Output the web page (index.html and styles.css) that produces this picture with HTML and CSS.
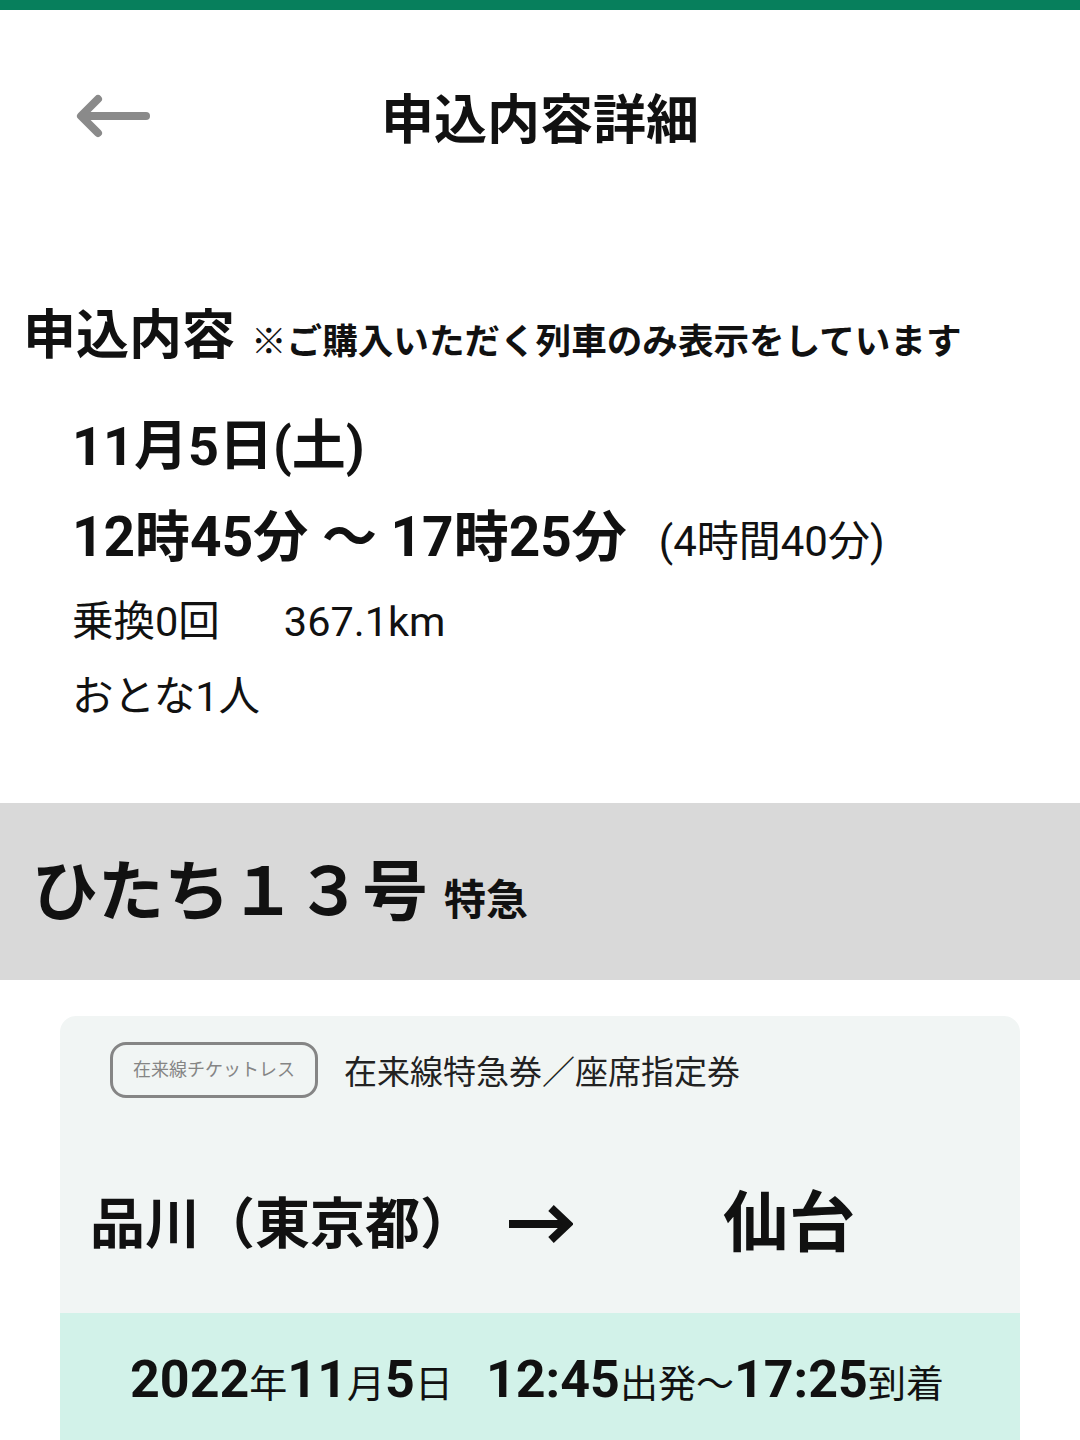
FILE: index.html
```html
<!DOCTYPE html>
<html lang="ja">
<head>
<meta charset="utf-8">
<title>申込内容詳細</title>
<link rel="stylesheet" href="styles.css">
</head>
<body>
<div class="topbar"></div>
<header class="header">
  <button class="back" aria-label="戻る">
    <svg width="76" height="48" viewBox="0 0 76 48">
      <polyline points="23,5 6,22 23,39" fill="none" stroke="#8a8a8a" stroke-width="8" stroke-linecap="round" stroke-linejoin="round"/>
      <line x1="8" y1="22" x2="71" y2="22" stroke="#8a8a8a" stroke-width="8" stroke-linecap="round"/>
    </svg>
  </button>
  <h1 class="title">申込内容詳細</h1>
</header>

<section class="summary">
  <div class="sum-head">
    <h2 class="sum-title">申込内容</h2>
    <span class="sum-note">※ご購入いただく列車のみ表示をしています</span>
  </div>
  <div class="sum-body">
    <div class="sum-date">11月5日(土)</div>
    <div class="sum-time">12時45分 〜 17時25分<span class="sum-dur">(4時間40分)</span></div>
    <div class="sum-line"><span>乗換0回</span><span class="sum-km">367.1km</span></div>
    <div class="sum-line">おとな1人</div>
  </div>
</section>

<div class="train">
  <span class="train-name">ひたち１３号</span><span class="train-type">特急</span>
</div>

<div class="card">
  <div class="card-top">
    <div class="ticket-row">
      <span class="badge">在来線チケットレス</span>
      <span class="ticket-kind">在来線特急券／座席指定券</span>
    </div>
    <div class="route">
      <span class="from">品川（東京都）</span>
      <svg class="route-arrow" width="66" height="40" viewBox="0 0 66 40">
        <line x1="2" y1="20" x2="60" y2="20" stroke="#111" stroke-width="8"/>
        <polyline points="44,4 61,20 44,36" fill="none" stroke="#111" stroke-width="8"/>
      </svg>
      <span class="to">仙台</span>
    </div>
  </div>
  <div class="card-time">
    <span class="b">2022</span><span class="s">年</span><span class="b">11</span><span class="s">月</span><span class="b">5</span><span class="s">日</span><span class="b gap">12:45</span><span class="s">出発〜</span><span class="b">17:25</span><span class="s">到着</span>
  </div>
</div>
</body>
</html>
```

FILE: styles.css
```css
* { box-sizing: border-box; }
html, body { margin: 0; padding: 0; }
body {
  width: 1080px;
  background: #fff;
  color: #111;
  font-family: Roboto, "Noto Sans CJK JP", sans-serif;
  overflow: hidden;
}
.topbar { height: 10px; background: #077f5c; }

.header {
  position: relative;
  height: 220px;
  padding-top: 81px;
}
.back {
  position: absolute;
  left: 75px;
  top: 84px;
  border: 0;
  background: none;
  padding: 0;
}
.title {
  margin: 0;
  text-align: center;
  font-size: 53px;
  line-height: 60px;
  font-weight: 700;
}

.summary { padding-top: 76px; }
.sum-head {
  display: flex;
  align-items: baseline;
  padding-left: 23px;
  gap: 16px;
}
.sum-title { margin: 0; font-size: 53px; line-height: 60px; font-weight: 700; }
.sum-note { font-size: 35.6px; font-weight: 700; }

.sum-body { padding-left: 72px; padding-top: 46px; }
.sum-date { font-size: 54px; line-height: 70px; font-weight: 700; }
.sum-time { font-size: 55px; line-height: 70px; font-weight: 700; margin-top: 20px; }
.sum-dur { font-size: 42px; font-weight: 400; margin-left: 32px; }
.sum-line { font-size: 41.5px; line-height: 60px; margin-top: 15px; }
.sum-km { margin-left: 64px; }

.train {
  margin-top: 76px;
  height: 177px;
  background: #d9d9d9;
  padding-left: 32px;
  padding-top: 50px;
  display: flex;
  align-items: baseline;
}
.train-name { font-size: 66px; line-height: 80px; font-weight: 700; }
.train-type { font-size: 42px; font-weight: 700; margin-left: 16px; }

.card {
  margin: 36px 60px 0;
  background: #f1f5f4;
  border-radius: 16px 16px 0 0;
}
.card-top { padding: 26px 0 0 50px; height: 297px; }
.ticket-row { display: flex; align-items: center; gap: 26px; }
.badge {
  display: inline-block;
  height: 56px;
  padding: 0 20px;
  border: 3px solid #858585;
  border-radius: 16px;
  color: #858585;
  font-size: 18px;
  line-height: 50px;
}
.ticket-kind { font-size: 33px; color: #222; }
.route {
  display: flex;
  align-items: center;
  margin-top: 86px;
  margin-left: -20px;
}
.from { font-size: 55px; font-weight: 700; line-height: 80px; }
.route-arrow { margin-left: 32px; }
.to { font-size: 66px; font-weight: 700; line-height: 80px; margin-left: 150px; }

.card-time {
  background: #d2f2e9;
  height: 140px;
  padding: 36px 0 0 70px;
  white-space: nowrap;
}
.card-time .b { font-size: 52px; font-weight: 700; }
.card-time .s { font-size: 38px; }
.card-time .gap { margin-left: 33px; }
```
